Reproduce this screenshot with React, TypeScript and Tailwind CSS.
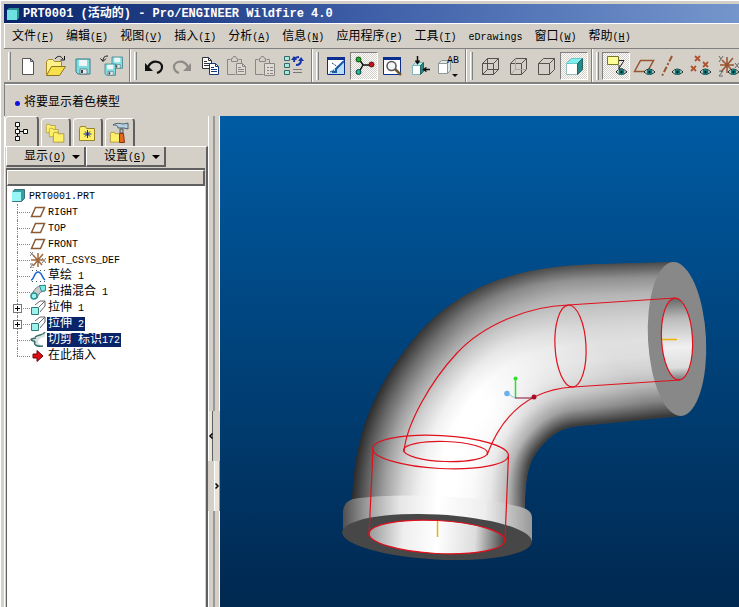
import { Fragment, type ReactNode } from 'react';

// Chinese glyphs sit on a 12px cell, Latin ones on half of that
const Label = ({ text, hotkey }: { text: string; hotkey?: string }) => (
  <span className="whitespace-pre">
    {text.split(/([\u4e00-\u9fff]+)/).filter(Boolean).map((part, i) =>
      /[\u4e00-\u9fff]/.test(part) ? (
        <Fragment key={i}>{part}</Fragment>
      ) : (
        <span key={i} className="text-[10px]">{part}</span>
      )
    )}
    {hotkey && <span className="text-[10px]">(<u>{hotkey}</u>)</span>}
  </span>
);

const menus = [
  { text: '文件', hotkey: 'F' },
  { text: '编辑', hotkey: 'E' },
  { text: '视图', hotkey: 'V' },
  { text: '插入', hotkey: 'I' },
  { text: '分析', hotkey: 'A' },
  { text: '信息', hotkey: 'N' },
  { text: '应用程序', hotkey: 'P' },
  { text: '工具', hotkey: 'T' },
  { text: 'eDrawings' },
  { text: '窗口', hotkey: 'W' },
  { text: '帮助', hotkey: 'H' }
];

const Eye = () => (
  <g>
    <path d="M14 20 Q19 14 25 20 Q19 25 14 20Z" fill="#fff" stroke="#222" />
    <circle cx="19.5" cy="20" r="3" fill="#0b7a78" />
    <circle cx="19.5" cy="20" r="1" fill="#000" />
  </g>
);

const Floppy = ({ x, y, s }: { x: number; y: number; s: number }) => (
  <g transform={`translate(${x} ${y}) scale(${s})`}>
    <path d="M0 0h14v15h-12l-2-2z" fill="#7fdde0" stroke="#3d7c86" />
    <path d="M3 1h8v6h-8z" fill="#eef6f6" />
    <path d="M4 10h7v5h-7z" fill="#e8e8e8" stroke="#2d5c66" strokeWidth=".6" />
    <path d="M5 11h2v3h-2z" fill="#345" />
  </g>
);

const Page = ({ x, y, stroke, fill = '#fff' }: { x: number; y: number; stroke: string; fill?: string }) => (
  <g transform={`translate(${x} ${y})`} stroke={stroke}>
    <path d="M.5 .5h6l3 3v8h-9z" fill={fill} />
    <path d="M6.500 .5v3h3M2 4.500h3M2 6.500h6M2 8.500h6" fill="none" />
  </g>
);

const Clipboard = () => (
  <g fill="none" stroke="#8a8782">
    <path d="M6.500 7.500h-3v15h8M14.500 7.500h3v4M7.500 9.500h6v-3h-1l-1-2h-2l-1 2h-1z" />
  </g>
);

const Wire = ({ hidden }: { hidden?: string }) => (
  <g fill="none" stroke="#55524e">
    <path d="M6.500 11.500h11v11h-11zM6.500 11.500l5-5h11l-5 5M22.500 6.500v11l-5 5" />
    {hidden && <path d="M11.500 6.500v11h11M11.500 17.500l-5 5" stroke={hidden} />}
  </g>
);

const icons: Record<string, ReactNode> = {
  新建: <path d="M8.500 6.500h8l3 3v13h-11zM16.500 6.500v3h3" fill="#fff" stroke="#555" />,
  打开: (
    <g>
      <path d="M4.500 22.500v-13l2-2h4l2 2h7v5" fill="#fff08a" stroke="#a88a20" />
      <path d="M4.500 23.500l5-9h14l-6 9z" fill="#f6e04c" stroke="#8f761d" />
      <path d="M13 7c3-4 6-3 8 0M22.500 4v4h-4" fill="none" stroke="#111" />
    </g>
  ),
  保存: <Floppy x={6} y={7} s={1} />,
  备份: (
    <g>
      <Floppy x={14} y={5} s={0.75} />
      <Floppy x={7} y={12} s={0.75} />
      <path d="M10 4c-4 0-5 2-5 5M2.500 6.500l2.500 3 3-3" fill="none" stroke="#111" />
    </g>
  ),
  撤消: (
    <g>
      <path d="M8 15c4-8 14-6 14 0c0 3-2 5-5 6" fill="none" stroke="#111" strokeWidth="2.200" />
      <path d="M5 11v8h8z" fill="#111" />
    </g>
  ),
  重做: (
    <g>
      <path d="M20 15c-4-8-14-6-14 0c0 3 2 5 5 6" fill="none" stroke="#8f8c87" strokeWidth="2.200" />
      <path d="M23 11v8h-8z" fill="#8f8c87" />
    </g>
  ),
  复制: (
    <g>
      <Page x={6} y={5} stroke="#333" />
      <Page x={13} y={11} stroke="#143a7c" />
    </g>
  ),
  粘贴: <g><Clipboard /><Page x={12} y={11} stroke="#8a8782" fill="#dedbd5" /></g>,
  选择性粘贴: (
    <g>
      <Clipboard />
      <path d="M12.500 11.500h10v12h-10zM15 15.500h2M18 15.500h3M15 18.500h2M18 18.500h3M15 21.500h2M18 21.500h3" fill="#dedbd5" stroke="#8a8782" />
    </g>
  ),
  再生: (
    <g>
      {[4, 11, 18].map((y) => (
        <path key={y} d={`M4.500 ${y + 0.5}h5v4h-5z`} fill="#a5e8e0" stroke="#336a68" />
      ))}
      <path d="M13 17.500h9M13 20.500h9" stroke="#777" />
      <path d="M14 10c0-4 2-5 5-5M21 8c0 4-2 5-5 5" fill="none" stroke="#1736a8" strokeWidth="2" />
      <path d="M11 8h6l-3-4zM18 9h6l-3-4zM18 5l-1 4" fill="#1736a8" />
    </g>
  ),
  重画: (
    <g>
      <path d="M5.500 5.500h17v17h-17z" fill="#fff" stroke="#0a2f8f" />
      <path d="M5 5h18v3h-18z" fill="#0a2f8f" />
      <path d="M6 22l16-14v14z" fill="#b8ddf4" />
      <path d="M22 9l-8 8v3h-4" fill="none" stroke="#1d5aa8" strokeWidth="2" />
      <path d="M10 11l6 4M8 20l4-2" stroke="#246" strokeDasharray="2 1" />
    </g>
  ),
  旋转中心: (
    <g>
      <path d="M9 7l4 6h8M13 13l-4 7" fill="none" stroke="#111" strokeWidth="1.500" />
      <circle cx="8.500" cy="7.500" r="2.500" fill="#18b030" stroke="#114411" />
      <circle cx="21.500" cy="12.500" r="2.500" fill="#c80f18" stroke="#551111" />
      <circle cx="8.500" cy="20" r="2.500" fill="#1bb8a0" stroke="#114444" />
    </g>
  ),
  缩放: (
    <g>
      <path d="M5.500 5.500h17v17h-17z" fill="#fff" stroke="#0a2f8f" />
      <path d="M5 5h18v3h-18z" fill="#0a2f8f" />
      <circle cx="13.500" cy="14" r="4.500" fill="#f2f6f6" stroke="#555" strokeWidth="1.500" />
      <path d="M17 17l6 6" stroke="#6d5a32" strokeWidth="2.500" />
    </g>
  ),
  重定向: (
    <g>
      <path d="M6.500 13.500h8v9h-8z" fill="#fff" stroke="#7fb5b5" />
      <path d="M6.500 13.500l3-3h8l-3 3z" fill="#b5ecec" stroke="#7fb5b5" />
      <path d="M14.500 13.500l3-3v9l-3 3z" fill="#268a88" stroke="#236464" />
      <path d="M11.500 4v7M9.500 8.500l2 3 2-3M24 17.500h-6M20.500 15.500l-3 2 3 2" fill="none" stroke="#111" strokeWidth="1.500" />
    </g>
  ),
  视图列表: (
    <g>
      <path d="M4.500 11.500h9v10h-9z" fill="#fff" stroke="#8a9a9a" />
      <path d="M4.500 11.500l3-3h9l-3 3zM13.500 11.500l3-3v10l-3 3z" fill="#dee6e6" stroke="#8a9a9a" />
      <text x="13" y="11" fontSize="10" className="font-['Liberation_Mono']">AB</text>
      <path d="M18 22h6l-3 3z" fill="#111" />
    </g>
  ),
  线框: <Wire hidden="#55524e" />,
  隐藏线: <Wire hidden="#aaa79f" />,
  无隐藏线: <Wire />,
  着色: (
    <g>
      <path d="M6.500 11.500h11v11h-11z" fill="#fff" stroke="#9bb" />
      <path d="M6.500 11.500l5-5h11l-5 5z" fill="#7ff0f0" stroke="#6cc" />
      <path d="M17.500 11.500l5-5v11l-5 5z" fill="#238a88" stroke="#266" />
    </g>
  ),
  注释显示: (
    <g>
      <path d="M5.500 4.500h11v8h-11z" fill="#ffff9a" stroke="#77752c" />
      <path d="M17 8.500h5l-5 8M17 13v4h4" fill="none" stroke="#222" />
      <Eye />
    </g>
  ),
  平面显示: <g><path d="M4.500 19.500l6-11h13l-6 11z" fill="none" stroke="#98532f" strokeWidth="1.500" /><Eye /></g>,
  轴显示: <g><path d="M14 4l-10 20" stroke="#98532f" strokeWidth="2" strokeDasharray="6 2 2 2" /><Eye /></g>,
  点显示: (
    <g>
      <path d="M9 4l5 5M14 4l-5 5M17 10l5 5M22 10l-5 5M5 14l5 5M10 14l-5 5" stroke="#b0522f" strokeWidth="1.800" />
      <Eye />
    </g>
  ),
  坐标系显示: (
    <g>
      <path d="M13 5v16M6 13h14M7 20l12-14M8 8l9 9" stroke="#98532f" strokeWidth="1.500" />
      <path d="M5 4l2 3M9 4l-4 6M5 19h4l-4 5h4M21 11l4 5M25 11l-4 5" fill="none" stroke="#666" />
      <Eye />
    </g>
  )
};

const toolGroups = [
  ['新建', '打开', '保存', '备份'],
  ['撤消', '重做', '复制', '粘贴', '选择性粘贴', '再生'],
  ['重画', '旋转中心', '缩放', '重定向', '视图列表'],
  ['线框', '隐藏线', '无隐藏线', '着色'],
  ['注释显示', '平面显示', '轴显示', '点显示', '坐标系显示']
];
const pressed = ['旋转中心', '着色', '注释显示'];

const Toolbar = () => (
  <div className="flex h-9 overflow-hidden border-t border-b-2 border-[#808080] shadow-[0_1px_0_#fff]">
    {toolGroups.map((group, g) => (
      <div key={g} className="flex shrink-0 items-center border-r border-r-[#808080] pr-[3px] shadow-[1px_0_0_#fff]">
        <div className="mr-[3px] ml-1 h-7 w-[3px] border-l border-r border-l-white border-r-[#808080]" />
        {group.map((name) => (
          <button
            key={name}
            aria-label={name}
            className={
              pressed.includes(name)
                ? 'size-7 border border-t-[#808080] border-l-[#808080] border-r-white border-b-white bg-[conic-gradient(#fff_25%,#d4d0c8_0_50%,#fff_0_75%,#d4d0c8_0)] bg-[length:2px_2px]'
                : 'size-7 border border-transparent'
            }
          >
            <svg viewBox="1 1 26 26" className="block size-full">{icons[name]}</svg>
          </button>
        ))}
      </div>
    ))}
  </div>
);

const planeIcon = <path d="M1.500 12.500l4-9h9l-4 9z" fill="#fff" stroke="#8a5a36" strokeWidth="1.500" />;
const extrudeIcon = (
  <g>
    <path d="M5 5l5-4h5v5l-5 6M15 1l-6 6" fill="none" stroke="#666" />
    <path d="M1.500 7.500h7v7h-7z" fill="#9ff0ea" stroke="#2d7d7c" />
  </g>
);

interface TreeItem {
  text: string;
  icon: ReactNode;
  expandable?: boolean;
  selected?: boolean;
}

const tree: TreeItem[] = [
  { text: 'RIGHT', icon: planeIcon },
  { text: 'TOP', icon: planeIcon },
  { text: 'FRONT', icon: planeIcon },
  {
    text: 'PRT_CSYS_DEF',
    icon: (
      <g>
        <path d="M8 1v14M1 8h12M3 14l10-12M3 3l9 10" stroke="#a0683c" strokeWidth="1.500" />
        <path d="M0 0l4 4M0 4l3-4M12 6l4 5M16 6l-4 5M0 12h3l-3 4h4" fill="none" stroke="#777" />
      </g>
    )
  },
  {
    text: '草绘 1',
    icon: (
      <g fill="none">
        <path d="M2 2.500h14M2 13.500h14" stroke="#456" strokeDasharray="1 3" />
        <path d="M1 12c3 0 3-8 7-8s4 6 7 8" stroke="#1464d8" strokeWidth="1.500" />
      </g>
    )
  },
  {
    text: '扫描混合 1',
    icon: (
      <g>
        <path d="M1 12c3-6 5-9 9-10l5-1v6c-5 0-6 3-8 7z" fill="#ccc" stroke="#678" />
        <path d="M9.500 1.500h6v5l-4 1z" fill="#7ce8e2" stroke="#2b9090" />
        <circle cx="4" cy="12" r="3" fill="#9ff4ee" stroke="#2b9090" strokeWidth="1.500" />
      </g>
    )
  },
  { text: '拉伸 1', icon: extrudeIcon, expandable: true },
  { text: '拉伸 2', icon: extrudeIcon, expandable: true, selected: true },
  {
    text: '切剪 标识172',
    icon: (
      <g>
        <path d="M15 1c-3 3-6 1-10 4l-4 2c0 3 4 2 4 3c-2 3 3 5 7 4l-4-3c-1-3 3-6 7-6z" fill="#d8e4e2" />
        <path d="M15 0c-2 4-6 2-10 5M1 7c0 3 4 1 4 3c-2 3 3 5 8 4M1 7l5-1" fill="none" stroke="#3c6c6c" strokeWidth="1.500" />
      </g>
    ),
    selected: true
  },
  { text: '在此插入', icon: <path d="M3 6h4v-3.500l6 5.500-6 5.500v-3.500h-4z" fill="#e00c14" stroke="#6d0808" /> }
];

const ModelTree = () => (
  <ul className="grow bg-white pt-[2px] leading-4">
    <li>
      <button className="flex h-4 items-center pl-1">
        <svg className="size-4 shrink-0" viewBox="0 0 16 16">
          <path d="M1.500 4.500l2-3h10v9l-3 3h-9z" fill="#34a2a4" stroke="#3f6f78" />
          <path d="M1 4h9v9h-9z" fill="#96f6f8" />
        </svg>
        <span className="pl-[2px]"><Label text="PRT0001.PRT" /></span>
      </button>
      <ul>
        {tree.map((item, i) => (
          <li key={item.text} className="flex h-4 items-center">
            <div className="relative ml-[6px] h-4 w-[17px] shrink-0">
              <div className={`absolute top-0 left-[4px] border-l border-dotted border-[#888] ${i === tree.length - 1 ? 'h-2' : 'h-4'}`} />
              <div className="absolute top-2 right-0 left-[4px] border-t border-dotted border-[#888]" />
              {item.expandable && (
                <button aria-label={`展开 ${item.text}`} className="absolute top-1 left-0 size-[9px] border border-[#777] bg-white">
                  <svg viewBox="0 0 7 7" className="block size-full"><path d="M1 3.500h5M3.500 1v5" stroke="#000" /></svg>
                </button>
              )}
            </div>
            <button className="flex h-4 items-center">
              <svg className="size-4 shrink-0" viewBox="0 0 16 16">{item.icon}</svg>
              <span className={item.selected ? 'ml-[1px] h-[14px] bg-[#0a246a] px-[1px] leading-[14px] text-white' : 'ml-[1px] px-[1px]'}>
                <Label text={item.text} />
              </span>
            </button>
          </li>
        ))}
      </ul>
    </li>
  </ul>
);

const Folder = ({ x, y, s = 1 }: { x: number; y: number; s?: number }) => (
  <path transform={`translate(${x} ${y}) scale(${s})`} d="M.5 14.500v-12l1-2h5l1 2h8v12z" fill="#fff06a" stroke="#99842b" />
);

const tabs = [
  {
    name: '模型树',
    icon: (
      <path d="M5.500 2.500h4v4h-4zM5.500 9.500h4v4h-4zM5.500 16.500h4v4h-4zM13.500 9.500h4v4h-4zM7.500 7v2M7.500 14v2M10 11.500h3" fill="#fff" stroke="#111" />
    )
  },
  { name: '文件夹浏览器', icon: <g><Folder x={2} y={3} s={0.6} /><Folder x={5} y={7} s={0.6} /><Folder x={9} y={11} s={0.7} /></g> },
  {
    name: '收藏夹',
    icon: <g><Folder x={3} y={5} /><path d="M11.500 9v8M7.500 13h8M9 10.500l5 5M14 10.500l-5 5" stroke="#0a2a9a" /></g>
  },
  {
    name: '工具',
    icon: (
      <g>
        <Folder x={2} y={11} s={0.7} />
        <path d="M5 4c4-3 8-1 11-1l4-1v6l-4-1h-6c0-3-3-3-5-3z" fill="#b8d0de" stroke="#46606e" />
        <path d="M12 8h3v4h-3z" fill="#bbb" stroke="#555" />
        <path d="M11.500 12.500h4l1 9h-5z" fill="#e06a20" stroke="#8a3510" />
      </g>
    )
  }
];

const Navigator = () => (
  <aside className="flex w-[204px] shrink-0 flex-col border-l border-white">
    <div role="tablist" className="flex h-[30px] items-end gap-[2px]">
      {tabs.map((tab, i) => (
        <button
          key={tab.name}
          role="tab"
          aria-label={tab.name}
          aria-selected={i === 0}
          className={`flex items-center justify-center rounded-t-sm border-t border-r-2 border-l border-t-white border-r-[#606060] border-l-white ${i === 0 ? 'h-[30px] w-[34px]' : 'h-7 w-[30px]'}`}
        >
          <svg className="size-6" viewBox="0 0 24 24">{tab.icon}</svg>
        </button>
      ))}
    </div>
    <div className="flex grow flex-col border-t border-r-2 border-t-white border-r-[#606060] px-[1px]">
      <div className="flex">
        {[['显示', 'O'], ['设置', 'G']].map(([text, hotkey]) => (
          <button key={text} className="flex h-5 w-20 items-center justify-end gap-[6px] border-r-2 border-b-2 border-l border-l-white border-r-[#606060] border-b-[#606060] pt-[2px] pr-1">
            <Label text={text} hotkey={hotkey} />
            <svg className="h-1 w-2" viewBox="0 0 8 4"><path d="M0 0h8l-4 4z" /></svg>
          </button>
        ))}
      </div>
      <div className="mt-[1px] flex grow flex-col border-t-2 border-l border-[#606060]">
        <div className="h-4 border-t border-r-2 border-b-2 border-l border-t-white border-l-white border-r-[#606060] border-b-[#606060]" />
        <ModelTree />
      </div>
    </div>
  </aside>
);

// Outer and inner silhouette of the elbow, in the same segment order
const outer = [352, 510, 352, 440, 372, 390, 413, 340, 455, 289, 510, 266, 600, 264, 676, 262];
const inner = [525, 514, 525, 480, 527, 463, 540, 448, 552, 434, 562, 427, 580, 426, 681, 416];
const BANDS = 160;

const sample = (profile: number[], t: number) => {
  const pos = t * (profile.length - 1);
  const i = Math.min(Math.floor(pos), profile.length - 2);
  const v = Math.round(profile[i] + (profile[i + 1] - profile[i]) * (pos - i));
  return `rgb(${v},${v},${v})`;
};

// Brightness across the pipe, at the flange, the bend and the straight end
const atFlange = [40, 105, 165, 212, 242, 255, 255, 248, 232, 190, 110];
const atBend = [50, 110, 160, 203, 238, 255, 255, 252, 232, 180, 60];
const atEnd = [70, 145, 180, 200, 215, 224, 222, 208, 180, 130, 55];

const bands = Array.from({ length: BANDS }, (_, i) => {
  const t = (i + 0.5) / BANDS;
  const p = outer.map((v, k) => v + (inner[k] - v) * t);
  return {
    t,
    d: `M${p[0]} ${p[1]}C${p.slice(2, 8).join(' ')}C${p.slice(8, 14).join(' ')}L${p[14]} ${p[15]}`
  };
});

const silhouette =
  'M352 510C352 440 372 390 413 340C455 289 510 266 600 264L676 262L681 416L580 426C562 427 552 434 540 448C527 463 525 480 525 514Z';

const Model = () => (
  <svg viewBox="220 116 519 491" preserveAspectRatio="xMinYMin slice" className="block size-full">
    <defs>
      {bands.map((b, i) => (
        <linearGradient key={i} id={`band${i}`} gradientUnits="userSpaceOnUse" x1="430" y1="470" x2="600" y2="340">
          <stop offset="0" stopColor={sample(atFlange, b.t)} />
          <stop offset=".4" stopColor={sample(atBend, b.t)} />
          <stop offset="1" stopColor={sample(atEnd, b.t)} />
        </linearGradient>
      ))}
      <clipPath id="pipe"><path d={silhouette} /></clipPath>
      <linearGradient id="flange">
        <stop offset="0" stopColor="#505050" />
        <stop offset=".12" stopColor="#999" />
        <stop offset=".3" stopColor="#e6e6e6" />
        <stop offset=".5" stopColor="#fff" />
        <stop offset=".75" stopColor="#eee" />
        <stop offset="1" stopColor="#999" />
      </linearGradient>
      <linearGradient id="bore">
        <stop offset="0" stopColor="#999" />
        <stop offset=".25" stopColor="#eee" />
        <stop offset=".5" stopColor="#fff" />
        <stop offset=".78" stopColor="#ddd" />
        <stop offset="1" stopColor="#444" />
      </linearGradient>
      <linearGradient id="outlet" x2="0" y2="1">
        <stop offset="0" stopColor="#666" />
        <stop offset=".25" stopColor="#bbb" />
        <stop offset=".6" stopColor="#f0f0f0" />
        <stop offset=".85" stopColor="#ddd" />
        <stop offset="1" stopColor="#777" />
      </linearGradient>
    </defs>

    <g clipPath="url(#pipe)" fill="none" strokeWidth="3">
      {bands.map((b, i) => (
        <path key={i} d={b.d} stroke={`url(#band${i})`} />
      ))}
    </g>
    <ellipse cx="677" cy="339" rx="29" ry="77" fill="#888" transform="rotate(-3 677 339)" />
    <ellipse cx="677" cy="339" rx="15.500" ry="41" fill="url(#outlet)" transform="rotate(-3 677 339)" />

    <path d="M343 511C344 504 347 501 353 499C400 492 490 496 526 509C530 511 532 514 532 518V541L437 550L343 533Z" fill="url(#flange)" />
    <ellipse cx="437" cy="537" rx="95" ry="22.500" fill="#474747" transform="rotate(3 437 537)" />
    <ellipse cx="437" cy="537" rx="68" ry="16.500" fill="url(#bore)" transform="rotate(3 437 537)" />

    <g fill="none" stroke="#e0101c" strokeWidth="1.200">
      <ellipse cx="677" cy="339" rx="15.500" ry="41" transform="rotate(-3 677 339)" />
      <ellipse cx="570.500" cy="346" rx="15.500" ry="41" transform="rotate(-3 570 346)" />
      <path d="M568 305L675 298M573 387L680 380" />
      <path d="M404 452C406 425 430 382 457 353C484 324 530 306 568 305" />
      <path d="M487 455C500 420 525 390 573 387" />
      <ellipse cx="440.500" cy="452" rx="68" ry="16.500" transform="rotate(3 440 452)" />
      <ellipse cx="445.500" cy="451.500" rx="42" ry="10" transform="rotate(2 445 451)" />
      <path d="M373 449L369 536M508.500 455L505 540" />
      <ellipse cx="437" cy="537" rx="68" ry="16.500" transform="rotate(3 437 537)" />
    </g>
    <path d="M662 339.500H677M437.500 521V537" stroke="#f0b000" strokeWidth="1.500" />
    <path d="M515.500 398V380" stroke="#2ee02e" strokeWidth="1.500" />
    <path d="M515 398H532" stroke="#8a1030" />
    <path d="M515 398L508 394" stroke="#8cc4f0" />
    <circle cx="515.500" cy="378.500" r="2" fill="#2ee02e" />
    <circle cx="534" cy="397" r="2.500" fill="#a80d28" />
    <circle cx="507" cy="393.500" r="2.800" fill="#6ab2ec" />
  </svg>
);

const Splitter = () => (
  <div className="flex w-3 shrink-0 flex-col">
    <div className="grow-[2] basis-0 border-r border-l border-r-white border-l-white px-1">
      <div className="h-full border-x border-x-[#999]" />
    </div>
    <button aria-label="收起导航器" className="h-[50px] w-[5px] self-start border-r border-l border-r-[#606060] border-l-white bg-[#e8e4d8]">
      <svg viewBox="0 0 4 6" className="h-[6px] w-1"><path d="M3.500 .5L1 3l2.500 2.500" fill="none" stroke="#000" strokeWidth="1.500" /></svg>
    </button>
    <button aria-label="展开浏览器" className="h-[50px] w-[6px] self-end border-r border-l border-r-[#999] border-l-white bg-[#e8e4d8]">
      <svg viewBox="0 0 4 6" className="h-[6px] w-1"><path d="M.5 .5L3 3L.5 5.500" fill="none" stroke="#000" strokeWidth="1.500" /></svg>
    </button>
    <div className="h-24 border-r border-l border-r-white border-l-white px-1">
      <div className="h-full border-x border-x-[#999]" />
    </div>
  </div>
);

export default function App() {
  return (
    <div className="flex min-h-screen flex-col overflow-hidden bg-[#d4d0c8] pt-1 pl-1 font-['Liberation_Mono','Noto_Sans_CJK_SC',monospace] text-[12px] leading-4 text-black shadow-[inset_1px_1px_0_#fff]">
      <header className="flex h-[19px] items-center gap-1 overflow-hidden bg-linear-to-r from-[#0a246a] via-[#3f5fa8] to-[#7596cc] pl-[3px] font-bold whitespace-pre text-white">
        <svg className="size-3 shrink-0" viewBox="0 0 12 12">
          <path d="M0 2l2-2h10v10l-2 2h-10z" fill="#2f8e90" />
          <path d="M0 2h10v10h-10z" fill="#6ee2e2" />
        </svg>
        <h1>PRT0001 (活动的) - Pro/ENGINEER Wildfire 4.0</h1>
      </header>
      <nav className="flex h-[25px] items-center gap-3 overflow-hidden border-t border-l border-white pt-[2px] pl-[7px]">
        {menus.map((m) => (
          <button key={m.text} className="shrink-0"><Label text={m.text} hotkey={m.hotkey} /></button>
        ))}
      </nav>
      <Toolbar />
      <div className="flex h-8 items-center gap-1 border-l border-[#808080] pt-[6px] pl-[10px]">
        <span className="size-[5px] rounded-full bg-[#1010e0]" />
        <p><Label text="将要显示着色模型" /></p>
      </div>
      <div className="flex grow">
        <Navigator />
        <Splitter />
        <main className="relative min-w-0 grow bg-linear-to-b from-[#005ca4] to-[#002850]">
          <div className="absolute inset-0"><Model /></div>
        </main>
      </div>
    </div>
  );
}
